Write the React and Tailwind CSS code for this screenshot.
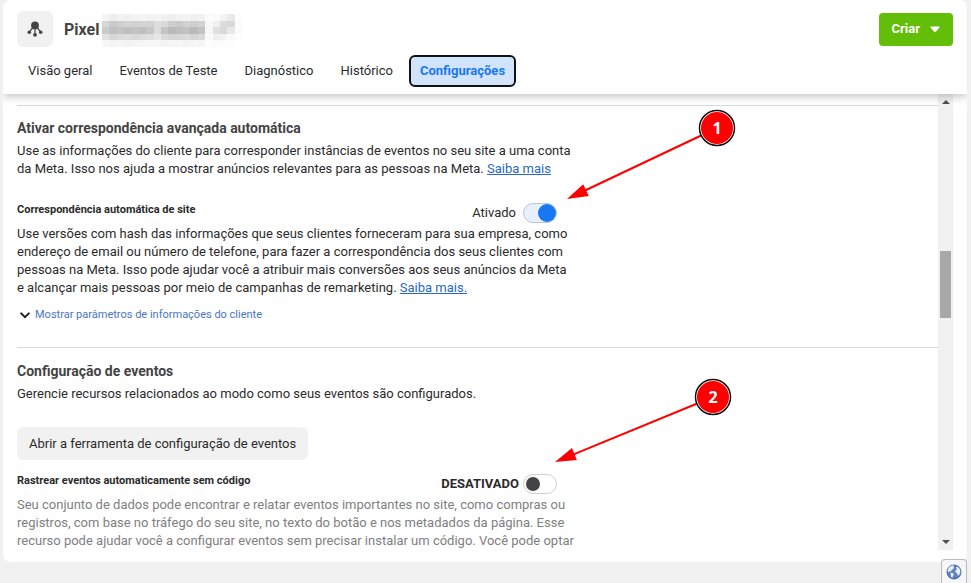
import React, { useState } from 'react'

const tabs = ['Visão geral', 'Eventos de Teste', 'Diagnóstico', 'Histórico', 'Configurações']

// shades of the redacted name, one row per band
const mosaic = [
  ['#f4f4f4', '#efefef', '#f2f2f2', '#f0f0f0', '#f3f3f3', '#f5f5f5', '#f2f2f2', '#f4f4f4', '#f1f1f1', '#efefef', '#f1f1f1', '#f3f3f3', '#f0f0f0', '#f2f2f2', '#fbfbfb', '#fafafa', '#f3f3f3', '#e9e9e9', '#fcfcfc'],
  ['#d6d6d6', '#cacaca', '#cecece', '#d3d3d3', '#d1d1d1', '#d5d5d5', '#d3d3d3', '#dedede', '#dadada', '#cccccc', '#c9c9c9', '#d1d1d1', '#cdcdcd', '#d3d3d3', '#f8f8f8', '#f0f0f0', '#dcdcdc', '#d9d9d9', '#fafafa'],
  ['#cbcbcb', '#c1c1c1', '#c4c4c4', '#bfbfbf', '#c3c3c3', '#bebebe', '#c6c6c6', '#dddddd', '#c4c4c4', '#b9b9b9', '#bebebe', '#c2c2c2', '#bababa', '#c3c3c3', '#f6f6f6', '#e0e0e0', '#d8d8d8', '#e8e8e8', '#fbfbfb'],
  ['#e1e1e1', '#d7d7d7', '#dbdbdb', '#dedede', '#d9d9d9', '#dddddd', '#dfdfdf', '#e7e7e7', '#dadada', '#d5d5d5', '#d8d8d8', '#dbdbdb', '#d6d6d6', '#dadada', '#fafafa', '#efefef', '#f3f3f3', '#f9f9f9', '#fdfdfd'],
  ['#f7f7f7', '#f4f4f4', '#f6f6f6', '#f3f3f3', '#f5f5f5', '#f6f6f6', '#f7f7f7', '#f6f6f6', '#f4f4f4', '#f5f5f5', '#f6f6f6', '#f4f4f4', '#f6f6f6', '#f5f5f5', '#fdfdfd', '#fbfbfb', '#fcfcfc', '#fdfdfd', '#ffffff'],
]

const RedactedName = () => (
  <svg
    width="140"
    height="33"
    viewBox="0 0 133 35"
    preserveAspectRatio="none"
    className="ml-[3px]"
    shapeRendering="crispEdges"
    aria-hidden="true"
  >
    {mosaic.map((row, y) =>
      row.map((fill, x) => <rect key={`${x}-${y}`} x={x * 7} y={y * 7} width="7" height="7" fill={fill} />)
    )}
  </svg>
)

const DatasetIcon = () => (
  <svg width="16" height="16" viewBox="0 0 16 16" fill="#444444" stroke="#444444" aria-hidden="true">
    <circle cx="8" cy="4.4" r="3.9" stroke="none" />
    <path d="M5.6 7L2.6 10.6M8 7.5V13M10.4 7L13.4 10.6" strokeWidth="1.2" fill="none" />
    <circle cx="2.3" cy="11.2" r="1.8" stroke="none" />
    <circle cx="8" cy="13.8" r="1.9" stroke="none" />
    <circle cx="13.7" cy="11.2" r="1.8" stroke="none" />
  </svg>
)

const GlobeIcon = () => (
  <svg width="16" height="16" viewBox="0 0 16 16" aria-hidden="true">
    <circle cx="8" cy="8" r="7" fill="#5f80bd" stroke="#46659f" />
    <path d="M3 3.6C4.4 2 6.4 1.4 8 1.6L7.4 3 8.2 3.8 6.8 5.2 5.6 6 5 7.6 3.6 7.2 2 8.2 1.6 6.4Z" fill="#e9eff9" />
    <path d="M4.6 8.6L7 9.2 8 10.6 6.8 12.2 6.4 14 5.2 13 4.8 11Z" fill="#e9eff9" />
    <path d="M10 3L12.4 3.2 14 5.6 14.4 8.4 13.2 10.8 12 12 11.2 9.6 9.6 8.4 9.4 6.4 10.8 5.2Z" fill="#e9eff9" />
  </svg>
)

const Toggle = ({ id, checked, onChange }) => (
  <span className="relative block h-5 w-[34px]">
    <input
      id={id}
      type="checkbox"
      role="switch"
      checked={checked}
      onChange={onChange}
      className="peer block h-5 w-[34px] cursor-pointer appearance-none rounded-full border border-[#d0d0d0] bg-white checked:border-[#b9c3dc] checked:bg-[#e7f1fd]"
    />
    <span className="pointer-events-none absolute top-[3px] left-[3px] size-[14px] rounded-full bg-[#444444] peer-checked:top-px peer-checked:left-[15px] peer-checked:size-[18px] peer-checked:bg-[#1877f2]" />
  </span>
)

const Callout = ({ number, x1, y1, x2, y2 }) => {
  const angle = (Math.atan2(y1 - y2, x1 - x2) * 180) / Math.PI
  return (
    <svg width="190" height="110" viewBox="0 0 190 110" className="block" aria-hidden="true">
      <line x1={x1} y1={y1} x2={x2 + 18} y2={y2 + ((y1 - y2) / (x1 - x2)) * 18} stroke="#ff0000" strokeWidth="2" />
      <path d="M0 0L21 -6.5V6.5Z" fill="#ff0000" transform={`translate(${x2} ${y2}) rotate(${angle})`} />
      <circle cx={x1} cy={y1} r="17.5" fill="#ffffff" stroke="#111111" strokeWidth="1.5" />
      <circle cx={x1} cy={y1} r="16" fill="#ff0000" />
      <text x={x1} y={y1 + 6} textAnchor="middle" fill="#ffffff" fontSize="16" fontWeight="700" fontFamily="Open Sans, sans-serif">
        {number}
      </text>
    </svg>
  )
}

const Header = () => {
  const [active, setActive] = useState('Configurações')

  return (
    <header className="relative z-10 bg-white pt-[11px] pb-[7px] shadow-[0_3px_8px_rgba(0,0,0,0.22)]">
      <div className="flex items-center justify-between pr-[14px] pl-[14px]">
        <div className="flex items-center">
          <div className="flex size-9 items-center justify-center rounded-md bg-[#f1f1f1]">
            <DatasetIcon />
          </div>
          <div className="ml-[11px] flex items-center pt-[2px]">
            <h1 className="text-[16px] leading-5 font-bold text-[#444444]">Pixel</h1>
            <RedactedName />
          </div>
        </div>
        <button className="flex h-[33px] items-center gap-[10px] rounded bg-[#63be09] px-[13px] text-[13px] font-bold text-white">
          Criar
          <svg width="10" height="7" viewBox="0 0 10 7" fill="currentColor" aria-hidden="true">
            <path d="M1 0.5H9Q10 0.8 9.4 1.6L5.8 5.8Q5 6.6 4.2 5.8L0.6 1.6Q0 0.8 1 0.5Z" />
          </svg>
        </button>
      </div>
      <nav className="mt-2 flex gap-[5px] pl-[14px]">
        {tabs.map((tab) => (
          <button
            key={tab}
            onClick={() => setActive(tab)}
            className={
              tab === active
                ? 'h-8 rounded-md border-2 border-[#111111] bg-[#d2e3fc] px-[9px] text-[13px] font-bold text-[#1877f2]'
                : 'h-8 rounded-md border-2 border-transparent px-[9px] text-[13px] text-[#2b2b2b]'
            }
          >
            {tab}
          </button>
        ))}
      </nav>
    </header>
  )
}

const Scrollbar = () => (
  <div className="flex w-[15px] shrink-0 flex-col items-center bg-[#f1f1f1] py-[6px]" aria-hidden="true">
    <svg width="8" height="4" viewBox="0 0 8 4" fill="#505050">
      <path d="M0 4L4 0L8 4Z" />
    </svg>
    <div className="mt-[147px] h-[67px] w-[11px] bg-[#a8a8a8]" />
    <svg width="8" height="4" viewBox="0 0 8 4" fill="#505050" className="mt-auto">
      <path d="M0 0L4 4L8 0Z" />
    </svg>
  </div>
)

const App = () => {
  const [matching, setMatching] = useState(true)
  const [tracking, setTracking] = useState(false)

  return (
    <div className="min-h-screen bg-[#f1f1f1] pr-1 pb-[21px] pl-[3px] font-[Roboto,sans-serif] text-[13px] leading-[18px] text-[#2b2b2b]">
      <div className="overflow-hidden rounded-lg bg-white pb-3">
        <Header />

        <div className="flex pr-[14px] pl-[14px]">
          <main className="min-w-0 flex-1 pt-[11px]">
            <section className="relative border-t border-[#d9d9d9] pt-3 pb-[23px]">
              <h2 className="text-[14px] leading-5 font-bold text-[#444444]">Ativar correspondência avançada automática</h2>
              <p className="mt-1">
                Use as informações do cliente para corresponder instâncias de eventos no seu site a uma conta
                <br />
                da Meta. Isso nos ajuda a mostrar anúncios relevantes para as pessoas na Meta.{' '}
                <a href="#" className="text-[#2a68c0] underline">Saiba mais</a>
              </p>
              <div className="mt-[25px] flex h-[22px] max-w-[540px] items-start justify-between">
                <h3 className="text-[11px] leading-[14px] font-bold">Correspondência automática de site</h3>
                <label htmlFor="matching" className="flex items-center gap-[7px]">
                  Ativado
                  <Toggle id="matching" checked={matching} onChange={() => setMatching(!matching)} />
                </label>
              </div>
              <p>
                Use versões com hash das informações que seus clientes forneceram para sua empresa, como
                <br />
                endereço de email ou número de telefone, para fazer a correspondência dos seus clientes com
                <br />
                pessoas na Meta. Isso pode ajudar você a atribuir mais conversões aos seus anúncios da Meta
                <br />
                e alcançar mais pessoas por meio de campanhas de remarketing.{' '}
                <a href="#" className="text-[#2a68c0] underline">Saiba mais.</a>
              </p>
              <button className="mt-[9px] flex items-center gap-[5px] pl-[3px] text-[11px] leading-[18px] text-[#4a76bd]">
                <svg width="10" height="7" viewBox="0 0 10 7" fill="none" stroke="#1c1e21" strokeWidth="2" strokeLinecap="round" aria-hidden="true">
                  <path d="M1.2 1.4L5 5.2L8.8 1.4" />
                </svg>
                Mostrar parâmetros de informações do cliente
              </button>
              <div className="pointer-events-none absolute top-0 left-[546px]">
                <Callout number={1} x1={154} y1={22} x2={4} y2={93} />
              </div>
            </section>

            <section className="relative border-t border-[#d9d9d9] pt-[13px]">
              <h2 className="text-[14px] leading-5 font-bold text-[#444444]">Configuração de eventos</h2>
              <p className="mt-1">Gerencie recursos relacionados ao modo como seus eventos são configurados.</p>
              <button className="mt-6 h-[33px] rounded-md bg-[#f1f1f1] px-3 text-[13px]">
                Abrir a ferramenta de configuração de eventos
              </button>
              <div className="mt-[14px] flex h-[22px] max-w-[540px] items-start justify-between">
                <h3 className="text-[11px] leading-[14px] font-bold">Rastrear eventos automaticamente sem código</h3>
                <label htmlFor="tracking" className="flex items-center gap-1 font-bold">
                  DESATIVADO
                  <Toggle id="tracking" checked={tracking} onChange={() => setTracking(!tracking)} />
                </label>
              </div>
              <p className="text-[#808080]">
                Seu conjunto de dados pode encontrar e relatar eventos importantes no site, como compras ou
                <br />
                registros, com base no tráfego do seu site, no texto do botão e nos metadados da página. Esse
                <br />
                recurso pode ajudar você a configurar eventos sem precisar instalar um código. Você pode optar
              </p>
              <div className="pointer-events-none absolute top-[26px] left-[534px]">
                <Callout number={2} x1={162} y1={23} x2={4} y2={88} />
              </div>
            </section>
          </main>
          <Scrollbar />
        </div>
      </div>

      <button aria-label="Idioma" className="fixed right-1 bottom-0 z-20 flex h-6 w-[26px] items-center justify-center rounded-t-sm border border-b-0 border-[#b8bcc8] bg-[#f5f6f7]">
        <GlobeIcon />
      </button>
    </div>
  )
}

export default App
